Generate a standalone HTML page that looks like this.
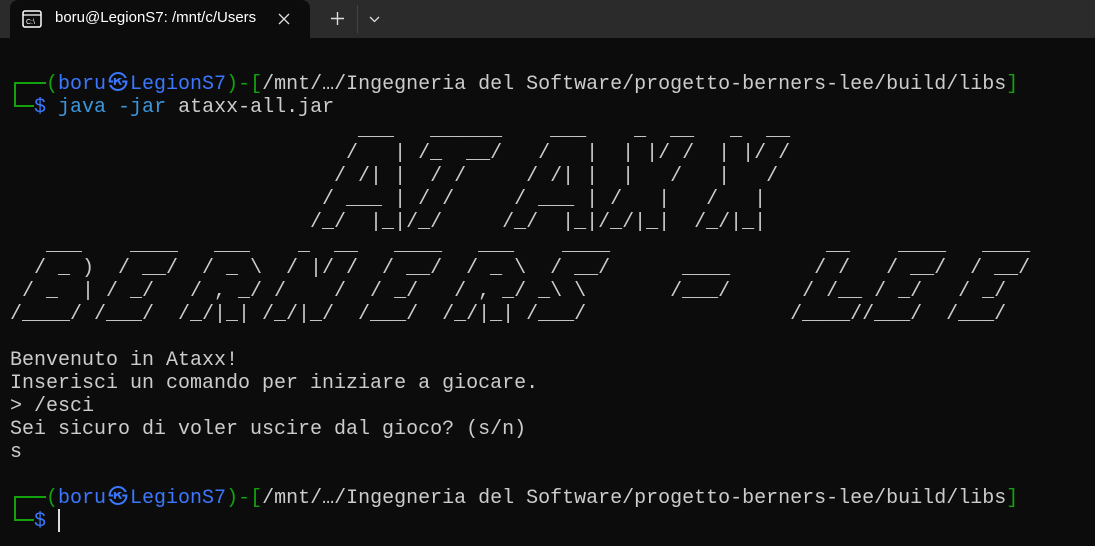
<!DOCTYPE html>
<html><head><meta charset="utf-8"><style>
html,body{margin:0;padding:0;background:#0c0c0c;width:1095px;height:546px;overflow:hidden}
.bar{position:absolute;left:0;top:0;width:1095px;height:38px;background:#2b2b2b}
.tab{position:absolute;left:10px;top:0;width:300px;height:38px;background:#0c0c0c;border-radius:8px 8px 0 0}
.title{position:absolute;left:55px;top:9px;font:15px "Liberation Sans","DejaVu Sans",sans-serif;color:#fff;white-space:nowrap;width:201px;overflow:hidden}
.term{position:absolute;left:10px;top:73px;font-family:"Liberation Mono","DejaVu Sans Mono",monospace;font-size:20px;color:#cccccc}
.l{height:23px;line-height:23px;white-space:pre}
.g{color:#13a10e}.b{color:#3b78ff}.c{color:#3a96dd}
.ln{position:absolute;background:#13a10e}
</style></head><body>
<div class="bar"></div>
<div class="tab"></div>
<svg style="position:absolute;left:22px;top:10px" width="20" height="18" viewBox="0 0 20 18"><rect x="1" y="1" width="18" height="16" rx="2" fill="none" stroke="#fff" stroke-width="1.5"/><line x1="1" y1="5" x2="19" y2="5" stroke="#fff" stroke-width="1.2"/><text x="4" y="14" font-size="7" fill="#fff" font-family="Liberation Sans">C:\</text></svg>
<div class="title">boru@LegionS7: /mnt/c/Users</div>
<svg style="position:absolute;left:278px;top:13px" width="12" height="12"><path d="M1 1L11 11M11 1L1 11" stroke="#ddd" stroke-width="1.3"/></svg>
<svg style="position:absolute;left:331px;top:12px" width="13" height="13"><path d="M6.5 0V13M0 6.5H13" stroke="#ddd" stroke-width="1.4"/></svg>
<div style="position:absolute;left:357px;top:5px;width:1px;height:28px;background:#444"></div>
<svg style="position:absolute;left:369px;top:16px" width="11" height="7"><path d="M1 1L5.5 5.5L10 1" fill="none" stroke="#ddd" stroke-width="1.3"/></svg>

<div class="ln" style="left:14px;top:82px;width:2px;height:25px"></div>
<div class="ln" style="left:14px;top:82px;width:32px;height:2px"></div>
<div class="ln" style="left:14px;top:105px;width:20px;height:2px"></div>
<div class="ln" style="left:14px;top:496px;width:2px;height:25px"></div>
<div class="ln" style="left:14px;top:496px;width:32px;height:2px"></div>
<div class="ln" style="left:14px;top:519px;width:20px;height:2px"></div>

<div class="term">
<div class="l">   <span class="g">(</span><span class="b">boru<span style="display:inline-block;width:24px;text-align:center">㉿</span>LegionS7</span><span class="g">)-[</span>/mnt/…/Ingegneria del Software/progetto-berners-lee/build/libs<span class="g">]</span></div>
<div class="l">  <span class="b">$</span> <span class="c">java -jar</span> ataxx-all.jar</div>
<div class="l">                             ___   ______    ___    _  __   _  __</div>
<div class="l">                            /   | /_  __/   /   |  | |/ /  | |/ /</div>
<div class="l">                           / /| |  / /     / /| |  |   /   |   / </div>
<div class="l">                          / ___ | / /     / ___ | /   |   /   |  </div>
<div class="l">                         /_/  |_|/_/     /_/  |_|/_/|_|  /_/|_|  </div>
<div class="l">   ___    ____   ___    _  __   ____   ___    ____                  __    ____   ____</div>
<div class="l">  / _ )  / __/  / _ \  / |/ /  / __/  / _ \  / __/      ____       / /   / __/  / __/</div>
<div class="l"> / _  | / _/   / , _/ /    /  / _/   / , _/ _\ \       /___/      / /__ / _/   / _/  </div>
<div class="l">/____/ /___/  /_/|_| /_/|_/  /___/  /_/|_| /___/                 /____//___/  /___/  </div>
<div class="l"> </div>
<div class="l">Benvenuto in Ataxx!</div>
<div class="l">Inserisci un comando per iniziare a giocare.</div>
<div class="l">&gt; /esci</div>
<div class="l">Sei sicuro di voler uscire dal gioco? (s/n)</div>
<div class="l">s</div>
<div class="l"> </div>
<div class="l">   <span class="g">(</span><span class="b">boru<span style="display:inline-block;width:24px;text-align:center">㉿</span>LegionS7</span><span class="g">)-[</span>/mnt/…/Ingegneria del Software/progetto-berners-lee/build/libs<span class="g">]</span></div>
<div class="l">  <span class="b">$</span> </div>
</div>
<div style="position:absolute;left:58px;top:509px;width:2px;height:23px;background:#ddd"></div>
</body></html>
